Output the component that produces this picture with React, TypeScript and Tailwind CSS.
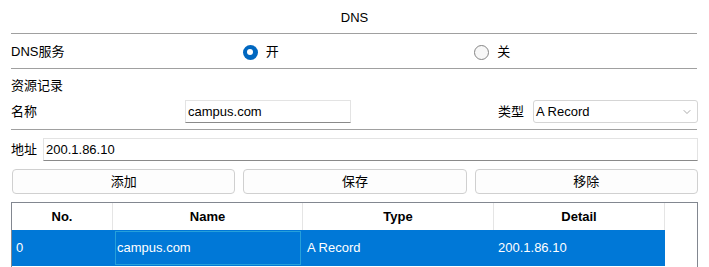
import { ChevronDown } from 'lucide-react';

const rows = [{ no: '0', name: 'campus.com', type: 'A Record', detail: '200.1.86.10' }];

export default function App() {
  return (
    <div
      className="w-[709px] h-[267px] overflow-hidden bg-white text-[13px] text-black px-[11px]"
      style={{ fontFamily: '"Liberation Sans", "Noto Sans CJK SC", sans-serif' }}
    >
      <div className="h-[33px] flex items-center justify-center pt-[3px]">DNS</div>
      <div className="h-px bg-[#a0a0a0] mr-[1px]" />

      <div className="h-[34px] grid grid-cols-3 gap-2 items-center pt-[2px]">
        <span>DNS服务</span>
        <label className="flex items-center gap-[8px]">
          <span className="w-[15px] h-[15px] rounded-full bg-[#0067c0] flex items-center justify-center">
            <span className="w-[6px] h-[6px] rounded-full bg-white" />
          </span>
          <span>开</span>
        </label>
        <label className="flex items-center gap-[8px]">
          <span className="w-[15px] h-[15px] rounded-full border border-[#858585] bg-[#f7f7f7]" />
          <span>关</span>
        </label>
      </div>
      <div className="h-px bg-[#a0a0a0] mr-[1px]" />

      <div className="h-[30px] flex items-center pt-[4px]">资源记录</div>
      <div className="h-[23px] mt-[1px] flex items-center">
        <span className="w-[174px]">名称</span>
        <div className="w-[166px] h-[23px] border border-[#e3e3e3] border-b-[#8a8a8a] flex items-center px-[2px]">
          campus.com
        </div>
        <span className="ml-auto mr-[9px]">类型</span>
        <div className="w-[165px] h-[23px] border border-[#d5d5d5] rounded-[3px] flex items-center justify-between pl-[2px] pr-[4px]">
          <span>A Record</span>
          <ChevronDown className="w-[12px] h-[12px] text-[#707070]" strokeWidth={1.2} />
        </div>
      </div>
      <div className="h-px bg-[#a0a0a0] mt-[6px] mr-[1px]" />

      <div className="h-[23px] mt-[8px] flex items-center">
        <span className="w-[32px]">地址</span>
        <div className="flex-1 h-[23px] border border-[#e3e3e3] border-b-[#8a8a8a] flex items-center px-[2px]">
          200.1.86.10
        </div>
      </div>

      <div className="mt-[8px] grid grid-cols-3 gap-2 pl-[1px]">
        {['添加', '保存', '移除'].map((t) => (
          <button
            key={t}
            className="h-[25px] rounded-[4px] border border-[#d0d0d0] bg-[#fdfdfd] flex items-center justify-center"
          >
            {t}
          </button>
        ))}
      </div>

      <div className="mt-[8px] h-[90px] border border-[#828790] bg-white">
        <div className="flex h-[27px] font-bold">
          <div className="w-[101px] border-r border-[#e5e5e5] flex items-center justify-center">No.</div>
          <div className="w-[190px] border-r border-[#e5e5e5] flex items-center justify-center">Name</div>
          <div className="w-[191px] border-r border-[#e5e5e5] flex items-center justify-center">Type</div>
          <div className="w-[171px] border-r border-[#e5e5e5] flex items-center justify-center">Detail</div>
        </div>
        {rows.map((r) => (
          <div key={r.no} className="flex h-[36px] w-[653px] bg-[#0078d7] text-white">
            <div className="w-[101px] flex items-center pl-[4px]">{r.no}</div>
            <div className="w-[190px] flex items-center py-[1px] pl-[2px] pr-[2px]">
              <div className="w-full h-full border border-[#26a0da] flex items-center pl-[1px]">{r.name}</div>
            </div>
            <div className="w-[191px] flex items-center pl-[4px]">{r.type}</div>
            <div className="w-[171px] flex items-center pl-[4px]">{r.detail}</div>
          </div>
        ))}
      </div>
    </div>
  );
}
